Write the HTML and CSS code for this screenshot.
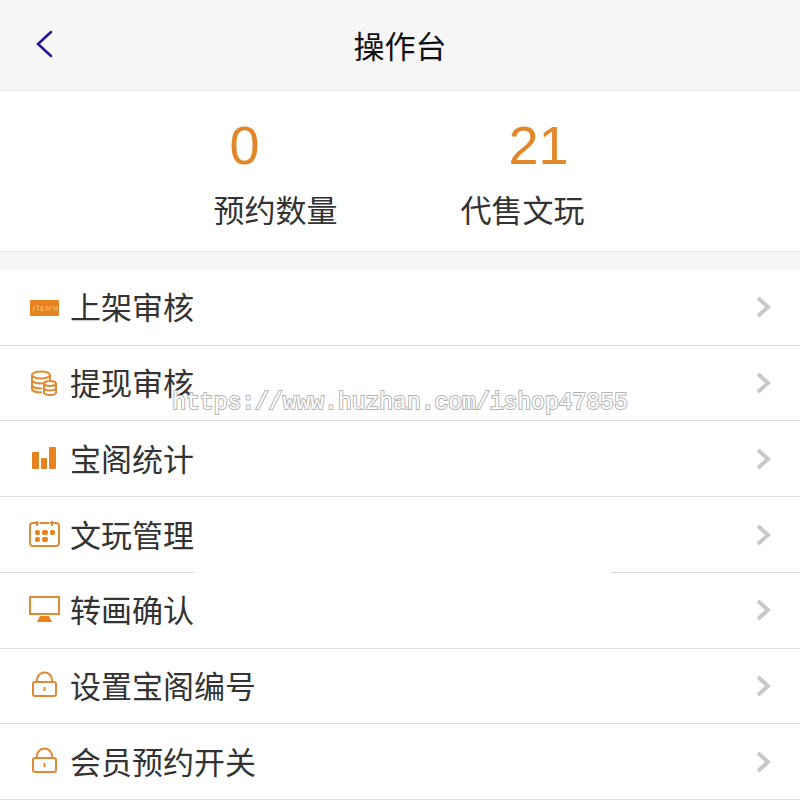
FILE: index.html
```html
<!DOCTYPE html>
<html lang="zh-CN">
<head>
  <meta charset="UTF-8">
  <meta name="viewport" content="width=device-width, initial-scale=1.0">
  <title>操作台</title>
  <link rel="stylesheet" href="styles.css">
</head>
<body>

<header class="header">
  <button class="back" type="button" aria-label="返回">
    <svg width="20" height="30" viewBox="0 0 20 30"><path d="M17 2 L4 14 L17 26"/></svg>
  </button>
  <h1>操作台</h1>
</header>

<section class="stats">
  <div class="numbers">
    <span>0</span>
    <span>21</span>
  </div>
  <div class="names">
    <span>预约数量</span>
    <span>代售文玩</span>
  </div>
</section>

<nav class="menu">
  <a class="item" href="#">
    <svg class="icon" viewBox="0 0 32 32">
      <rect class="solid" x="2" y="9" width="29" height="16" rx="1"/>
      <path class="mark" d="M6 15l-1 5M8 15h3l-2 2 2 3M13 16h2v4h-2zM17 16h3v3h-3M22 15v5M26 14l-2 3M26 17h3M27 16l-1 4M29 15v5"/>
    </svg>
    <span>上架审核</span>
    <svg class="arrow" viewBox="0 0 16 22"><path d="M2 2 L12 11 L2 20"/></svg>
  </a>
  <a class="item" href="#">
    <svg class="icon" viewBox="0 0 32 32">
      <ellipse cx="13" cy="8" rx="9" ry="3.5"/>
      <path d="M4 8v14c0 2 4 3.500 10 3.500M22 8v5M4 13c0 2 4 3.500 9 3.500M4 18c0 2 4 3.500 10 3.500M13 16.500l3-.5"/>
      <ellipse cx="22" cy="16.500" rx="6" ry="2.500"/>
      <path d="M16 16.500v9c0 3.300 12 3.300 12 0v-9M16 21c0 3.300 12 3.300 12 0"/>
    </svg>
    <span>提现审核</span>
    <svg class="arrow" viewBox="0 0 16 22"><path d="M2 2 L12 11 L2 20"/></svg>
  </a>
  <a class="item" href="#">
    <svg class="icon" viewBox="0 0 32 32">
      <rect class="solid" x="4" y="9" width="7" height="17" rx="1"/>
      <rect class="solid" x="13" y="15" width="6" height="11" rx="1"/>
      <rect class="solid" x="21" y="4" width="7" height="22" rx="1"/>
    </svg>
    <span>宝阁统计</span>
    <svg class="arrow" viewBox="0 0 16 22"><path d="M2 2 L12 11 L2 20"/></svg>
  </a>
  <a class="item patched" href="#">
    <svg class="icon" viewBox="0 0 32 32">
      <path d="M7 4H5Q2 4 2 7v17q0 3 3 3h23q3 0 3-3V7q0-3-3-3h-2M12 4h9M9 2v5M24 2v5"/>
      <path d="M7 4h4M22 4h4"/>
      <rect class="solid" x="7" y="11" width="5" height="5" rx="2"/>
      <rect class="solid" x="14" y="11" width="6" height="5" rx="2"/>
      <rect class="solid" x="22" y="11" width="5" height="5" rx="2"/>
      <rect class="solid" x="7" y="18" width="5" height="5" rx="2"/>
      <rect class="solid" x="14" y="18" width="6" height="5" rx="2"/>
    </svg>
    <span>文玩管理</span>
    <svg class="arrow" viewBox="0 0 16 22"><path d="M2 2 L12 11 L2 20"/></svg>
  </a>
  <a class="item" href="#">
    <svg class="icon" viewBox="0 0 32 32">
      <rect x="2" y="3" width="29" height="17"/>
      <path class="solid" d="M12 22h9l3 6H9z"/>
    </svg>
    <span>转画确认</span>
    <svg class="arrow" viewBox="0 0 16 22"><path d="M2 2 L12 11 L2 20"/></svg>
  </a>
  <a class="item" href="#">
    <svg class="icon" viewBox="0 0 32 32">
      <rect x="5" y="12" width="23" height="14" rx="2"/>
      <path d="M9 12v-2a7.500 7.500 0 0 1 15 0v2M16.500 17v4"/>
    </svg>
    <span>设置宝阁编号</span>
    <svg class="arrow" viewBox="0 0 16 22"><path d="M2 2 L12 11 L2 20"/></svg>
  </a>
  <a class="item" href="#">
    <svg class="icon" viewBox="0 0 32 32">
      <rect x="5" y="12" width="23" height="14" rx="2"/>
      <path d="M9 12v-2a7.500 7.500 0 0 1 15 0v2M16.500 17v4"/>
    </svg>
    <span>会员预约开关</span>
    <svg class="arrow" viewBox="0 0 16 22"><path d="M2 2 L12 11 L2 20"/></svg>
  </a>
</nav>

<div class="watermark">https://www.huzhan.com/ishop47855</div>

</body>
</html>
```
FILE: styles.css
```css
* {
  box-sizing: border-box;
}
body {
  display: flex;
  flex-direction: column;
  position: relative;
  min-height: 100vh;
  margin: 0;
  font-family: "Noto Sans CJK SC", sans-serif;
  font-size: 31px;
  line-height: 40px;
  color: #333;
  background-color: #f5f5f5;
}

/* Top bar */
.header {
  display: grid;
  grid-template-columns: 60px 1fr 60px;
  align-items: center;
  padding: 25px 16px;
  background-color: #f6f6f7;
  border-bottom: 1px solid #e8e8e8;
}
.header h1 {
  margin: 0;
  font-size: 31px;
  font-weight: 400;
  text-align: center;
  color: #111;
}
.back {
  display: flex;
  padding: 0 18px;
  background: none;
  border: none;
  cursor: pointer;
}
.back svg {
  fill: none;
  stroke: #23168c;
  stroke-width: 2.5;
  stroke-linecap: round;
}

/* Counters */
.stats {
  padding: 24px 2px 22px 0;
  background-color: #fff;
  border-bottom: 1px solid #e8e8e8;
}
.numbers,
.names {
  display: flex;
  justify-content: center;
}
.numbers {
  gap: 249px;
  margin-bottom: 14px;
  font-family: "Liberation Sans", Arial, sans-serif;
  font-size: 54px;
  line-height: 60px;
  color: #e2862a;
}
.names {
  gap: 123px;
}

/* Menu */
.menu {
  display: flex;
  flex: 1;
  flex-direction: column;
  margin-top: 18px;
  background-color: #fff;
}
.item {
  display: flex;
  flex: 1;
  align-items: center;
  position: relative;
  padding: 0 28px;
  color: #333;
  text-decoration: none;
  border-bottom: 1px solid #ddd;
}
.item span {
  flex: 1;
  margin: 0 0 2px 10px;
}
.icon {
  width: 32px;
  height: 32px;
  fill: none;
  stroke: #e08a35;
  stroke-width: 2;
}
.icon .solid {
  fill: #e6831f;
  stroke: none;
}
.icon .mark {
  stroke: #f5b56c;
  stroke-width: 1;
}
.arrow {
  width: 16px;
  height: 22px;
  fill: none;
  stroke: #c8c8c8;
  stroke-width: 4;
}
/* blank strip over the divider */
.patched::after {
  content: "";
  position: absolute;
  bottom: -1px;
  left: 195px;
  right: 189px;
  height: 3px;
  background-color: #fff;
}

.watermark {
  position: absolute;
  top: 50%;
  left: 0;
  width: 100%;
  margin-top: -17px;
  font-family: "Liberation Mono", monospace;
  font-size: 23px;
  text-align: center;
  color: #fff;
  -webkit-text-stroke: 2px #b4b4b4;
  paint-order: stroke fill;
  pointer-events: none;
}
```
